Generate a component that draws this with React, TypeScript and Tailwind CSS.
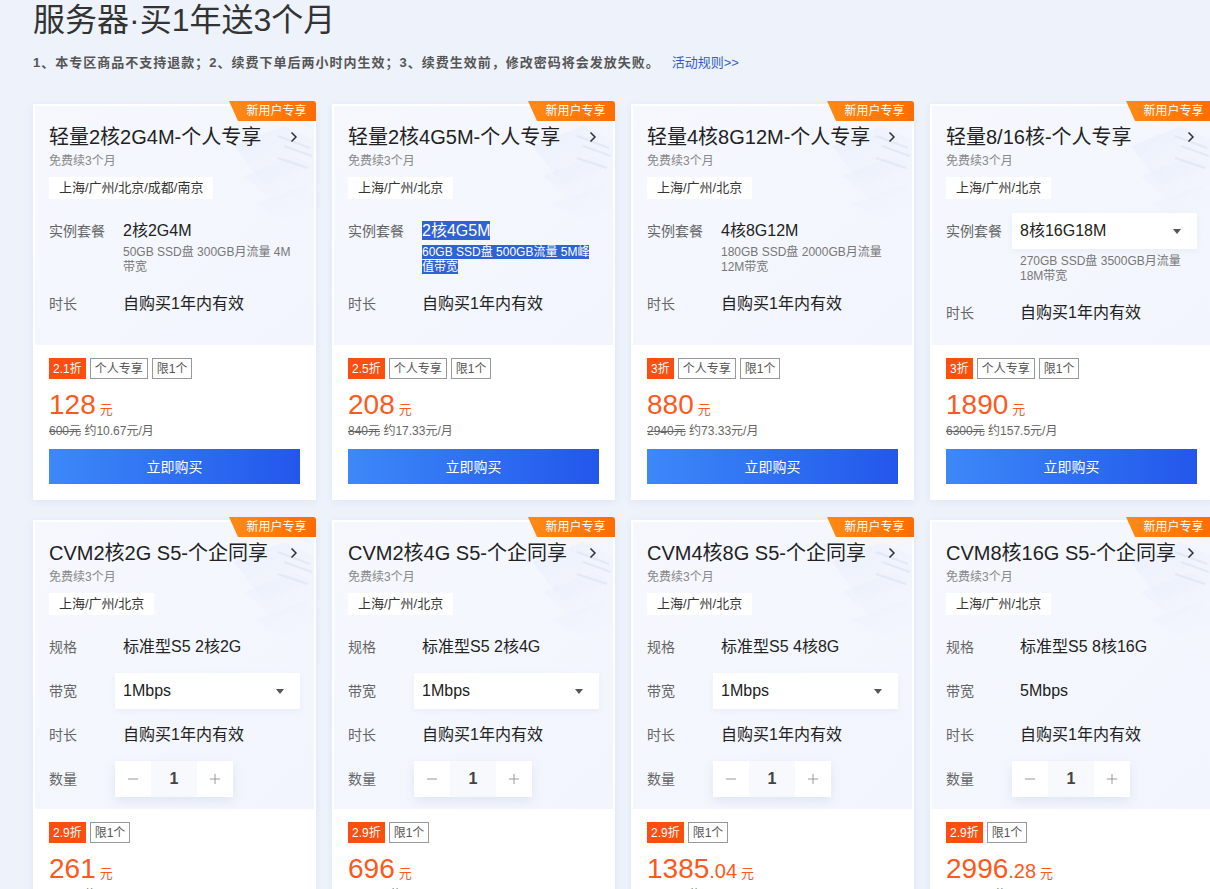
import { ChevronRight, Minus, Plus } from "lucide-react";

type Card = {
  title: string;
  region: string;
  rows: { label: string; value: string; select?: boolean; desc?: string; highlight?: boolean; stepper?: boolean }[];
  discount: string;
  tags: string[];
  price: string;
  decimal?: string;
  origin: string;
  monthly: string;
};

const liteCards: Card[] = [
  {
    title: "轻量2核2G4M-个人专享",
    region: "上海/广州/北京/成都/南京",
    rows: [
      { label: "实例套餐", value: "2核2G4M", desc: "50GB SSD盘 300GB月流量 4M带宽" },
      { label: "时长", value: "自购买1年内有效" },
    ],
    discount: "2.1折",
    tags: ["个人专享", "限1个"],
    price: "128",
    origin: "600元",
    monthly: "约10.67元/月",
  },
  {
    title: "轻量2核4G5M-个人专享",
    region: "上海/广州/北京",
    rows: [
      { label: "实例套餐", value: "2核4G5M", desc: "60GB SSD盘 500GB流量 5M峰值带宽", highlight: true },
      { label: "时长", value: "自购买1年内有效" },
    ],
    discount: "2.5折",
    tags: ["个人专享", "限1个"],
    price: "208",
    origin: "840元",
    monthly: "约17.33元/月",
  },
  {
    title: "轻量4核8G12M-个人专享",
    region: "上海/广州/北京",
    rows: [
      { label: "实例套餐", value: "4核8G12M", desc: "180GB SSD盘 2000GB月流量 12M带宽" },
      { label: "时长", value: "自购买1年内有效" },
    ],
    discount: "3折",
    tags: ["个人专享", "限1个"],
    price: "880",
    origin: "2940元",
    monthly: "约73.33元/月",
  },
  {
    title: "轻量8/16核-个人专享",
    region: "上海/广州/北京",
    rows: [
      { label: "实例套餐", value: "8核16G18M", select: true, desc: "270GB SSD盘 3500GB月流量 18M带宽" },
      { label: "时长", value: "自购买1年内有效" },
    ],
    discount: "3折",
    tags: ["个人专享", "限1个"],
    price: "1890",
    origin: "6300元",
    monthly: "约157.5元/月",
  },
];

const cvmRows = (spec: string, bw: string, select: boolean) => [
  { label: "规格", value: spec },
  { label: "带宽", value: bw, select },
  { label: "时长", value: "自购买1年内有效" },
  { label: "数量", value: "1", stepper: true },
];

const cvmCards: Card[] = [
  {
    title: "CVM2核2G S5-个企同享",
    region: "上海/广州/北京",
    rows: cvmRows("标准型S5 2核2G", "1Mbps", true),
    discount: "2.9折",
    tags: ["限1个"],
    price: "261",
    origin: "900元",
    monthly: "约21.75元/月",
  },
  {
    title: "CVM2核4G S5-个企同享",
    region: "上海/广州/北京",
    rows: cvmRows("标准型S5 2核4G", "1Mbps", true),
    discount: "2.9折",
    tags: ["限1个"],
    price: "696",
    origin: "2400元",
    monthly: "约58元/月",
  },
  {
    title: "CVM4核8G S5-个企同享",
    region: "上海/广州/北京",
    rows: cvmRows("标准型S5 4核8G", "1Mbps", true),
    discount: "2.9折",
    tags: ["限1个"],
    price: "1385",
    decimal: ".04",
    origin: "4776元",
    monthly: "约115.42元/月",
  },
  {
    title: "CVM8核16G S5-个企同享",
    region: "上海/广州/北京",
    rows: cvmRows("标准型S5 8核16G", "5Mbps", false),
    discount: "2.9折",
    tags: ["限1个"],
    price: "2996",
    decimal: ".28",
    origin: "10332元",
    monthly: "约249.69元/月",
  },
];

const Decoration = () => (
  <svg className="absolute right-0 top-0 pointer-events-none" width="140" height="130" viewBox="0 0 140 130">
    <defs>
      <linearGradient id="plate" x1="0" y1="0" x2="1" y2="1">
        <stop offset="0" stopColor="#e2e9fa" stopOpacity="0.9" />
        <stop offset="1" stopColor="#eef2fc" stopOpacity="0.2" />
      </linearGradient>
    </defs>
    <polygon points="60,40 110,20 140,34 140,60 90,80" fill="url(#plate)" opacity="0.6" />
    <polygon points="70,70 120,50 140,60 140,80 100,96" fill="url(#plate)" opacity="0.45" />
    <polygon points="80,98 128,80 140,86 140,104 108,114" fill="url(#plate)" opacity="0.35" />
    <path d="M104 30 L136 42 M110 40 L138 50 M104 52 L134 62" stroke="#dbe2f6" strokeWidth="2" opacity="0.6" />
  </svg>
);

const Caret = () => (
  <svg width="8" height="5" viewBox="0 0 8 5">
    <path d="M0 0 H8 L4 5 Z" fill="#555" />
  </svg>
);

const Row = ({ row, gap }: { row: Card["rows"][number]; gap: string }) => (
  <div className={`flex ${gap}`}>
    <div className="w-[66px] shrink-0 text-sm leading-9 text-[#666]">{row.label}</div>
    <div className="flex-1 min-w-0">
      {row.stepper ? (
        <div className="flex h-9 w-fit shadow-[0_4px_10px_rgba(60,90,160,0.10)]">
          <div className="w-9 flex items-center justify-center bg-white text-[#999]">
            <Minus size={16} strokeWidth={1.5} />
          </div>
          <div className="w-[46px] flex items-center justify-center bg-[#f7f9fd] text-base font-bold text-[#444]">
            {row.value}
          </div>
          <div className="w-9 flex items-center justify-center bg-white text-[#999]">
            <Plus size={16} strokeWidth={1.5} />
          </div>
        </div>
      ) : row.select ? (
        <div className="h-9 bg-white flex items-center justify-between px-2 pr-4 text-base text-[#222] shadow-[0_2px_6px_rgba(60,90,160,0.06)]">
          <span>{row.value}</span>
          <Caret />
        </div>
      ) : (
        <div className="pl-2 text-base leading-9 text-[#222]">
          {row.highlight ? <span className="bg-[#2f62d2] text-white leading-5 py-[1px]">{row.value}</span> : row.value}
        </div>
      )}
      {row.desc && (
        <div className={`pl-2 pr-1 text-xs leading-[15px] text-[#777] ${row.select ? "mt-[5px]" : "-mt-[4px]"}`}>
          {row.highlight ? <span className="bg-[#2f62d2] text-white">{row.desc}</span> : row.desc}
        </div>
      )}
    </div>
  </div>
);

const ProductCard = ({ card, cvm }: { card: Card; cvm?: boolean }) => (
  <div className="relative border-2 border-white bg-white shadow-[0_2px_8px_rgba(80,110,180,0.08)]">
    <div
      className={`relative overflow-hidden bg-linear-to-br from-[#f6f8fe] to-[#f2f5fd] px-[14px] pt-[17px] ${
        cvm ? "h-[287px]" : "h-[239px]"
      }`}
    >
      <Decoration />
      <div className="relative flex h-7 items-center justify-between">
        <span className="whitespace-nowrap text-[20px] leading-7 text-[#222]">{card.title}</span>
        <ChevronRight size={16} strokeWidth={2.5} className="shrink-0 -mr-[2px] text-[#333]" />
      </div>
      <div className="relative mt-[2px] text-xs leading-4 text-[#888]">免费续3个月</div>
      <div className="relative mt-2 inline-flex h-[22px] items-center bg-white px-[10px] text-[13px] text-[#333]">
        {card.region}
      </div>
      <div className="relative mt-[14px] flex flex-col">
        {card.rows.map((r, i) => (
          <Row key={r.label} row={r} gap={i === 0 ? "" : cvm ? "mt-2" : "mt-[11px]"} />
        ))}
      </div>
    </div>
    <div className="px-[14px] pt-[13px] pb-[14px]">
      <div className="flex gap-1">
        <span className="h-[21px] px-1 flex items-center bg-[#fb4f10] text-xs text-white">{card.discount}</span>
        {card.tags.map((t) => (
          <span key={t} className="h-[21px] px-1 flex items-center border border-[#999] text-xs text-[#555]">
            {t}
          </span>
        ))}
      </div>
      <div className="mt-[10px] flex h-8 items-baseline overflow-hidden text-[#fb5a1e] leading-8">
        <span className="text-[28px]">{card.price}</span>
        {card.decimal && <span className="text-[20px]">{card.decimal}</span>}
        <span className="ml-1 text-[13px]">元</span>
      </div>
      <div className="mt-[2px] h-4 text-xs leading-4 text-[#666]">
        <span className="line-through">{card.origin}</span> {card.monthly}
      </div>
      <button className="mt-[10px] h-[35px] w-full bg-linear-to-r from-[#3e88f8] to-[#2456eb] text-sm text-white">
        立即购买
      </button>
    </div>
    <div className="absolute -top-[5px] -right-[2px] h-5 w-[87px] bg-linear-to-r from-[#ff8a14] to-[#ff6c00] rounded-tr-[3px] [clip-path:polygon(0_0,100%_0,100%_100%,9px_100%)] flex items-center justify-center pl-2 text-xs text-white">
      新用户专享
    </div>
  </div>
);

export default function App() {
  return (
    <div className="h-[889px] w-[1210px] overflow-hidden bg-[#edf2fb] font-['Liberation_Sans','Noto_Sans_CJK_SC',sans-serif]">
      <div className="w-[1260px] pl-[33px]">
        <h1 className="text-[32px] leading-10 text-[#333]">服务器·买1年送3个月</h1>
        <div className="mt-[13px] flex items-center text-[13px] leading-5 text-[#555]">
          <span className="font-bold tracking-[1px]">
            1、本专区商品不支持退款；2、续费下单后两小时内生效；3、续费生效前，修改密码将会发放失败。
          </span>
          <span className="ml-3 text-[#2f5fc6]">活动规则&gt;&gt;</span>
        </div>
        <div className="mt-[31px] grid grid-cols-[repeat(4,283px)] gap-x-4 gap-y-5">
          {liteCards.map((c) => (
            <ProductCard key={c.title} card={c} />
          ))}
          {cvmCards.map((c) => (
            <ProductCard key={c.title} card={c} cvm />
          ))}
        </div>
      </div>
    </div>
  );
}
